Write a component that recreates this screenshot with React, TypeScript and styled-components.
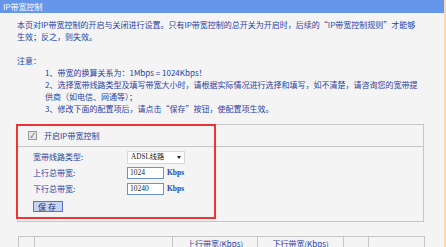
import React from 'react'
import styled, { createGlobalStyle } from 'styled-components'

const Colors = {
  page: '#f4f4f4',
  header: '#6496ea',
  text: '#2743a6',
  border: '#c6c6c6',
  stripe: '#fcd8aa',
  red: '#ee3535',
}

const GlobalStyle = createGlobalStyle`
  html, body {
    margin: 0;
    padding: 0;
    background: ${Colors.page};
    overflow: hidden;
  }
  body {
    font-family: "Noto Sans CJK SC", "Noto Sans", sans-serif;
    font-size: 8px;
    color: ${Colors.text};
  }
`

const Page = styled.div`
  display: flex;
  width: 446px;
  height: 247px;
  overflow: hidden;
`

const Main = styled.main`
  width: 444px;
  background: ${Colors.page};
`

const Stripe = styled.div`
  flex: 1;
  background: ${Colors.stripe};
`

const TitleBar = styled.header`
  height: 13px;
  background: ${Colors.header};
  color: #fff;
  line-height: 13px;
  padding-left: 3px;
`

const Content = styled.section`
  padding: 6px 0 0 17px;
  line-height: 12px;
`

const Line = styled.div`
  white-space: nowrap;
`

const NoteTitle = styled.div`
  margin-top: 12px;
`

const NoteList = styled.div`
  padding-left: 28px;
`

const Panel = styled.div`
  position: relative;
  margin-top: 9px;
  width: 405px;
  border: 1px solid ${Colors.border};
  padding-bottom: 8px;
`

const PanelHead = styled.div`
  display: flex;
  align-items: center;
  gap: 7px;
  height: 21px;
  padding-left: 10px;
  border-bottom: 1px solid ${Colors.border};
`

const Check = styled.span`
  width: 7px;
  height: 7px;
  border: 1px solid #9a9a9a;
  background: #e8e8e8;
  display: flex;
  align-items: center;
  justify-content: center;
  font-size: 7px;
  line-height: 7px;
  color: #555;
`

const Form = styled.div`
  padding: 2px 0 0 15px;
`

const Row = styled.div`
  display: grid;
  grid-template-columns: 92px max-content max-content;
  justify-content: start;
  align-items: center;
  column-gap: 2px;
  height: 16px;
`

const Select = styled.div`
  width: 50px;
  height: 11px;
  background: #fff;
  border: 1px solid #d8d8d8;
  display: flex;
  align-items: center;
  justify-content: space-between;
  padding: 0 3px 0 3px;
  font-family: "Liberation Serif", "Noto Sans CJK SC", serif;
  font-size: 7.2px;
  color: #222;
`

const Arrow = styled.span`
  width: 0;
  height: 0;
  border-left: 2.5px solid transparent;
  border-right: 2.5px solid transparent;
  border-top: 3px solid #222;
`

const Field = styled.div<{ $w: number }>`
  width: ${p => p.$w}px;
  height: 10px;
  background: #fff;
  border: 1px solid #6d8fd8;
  padding-left: 2px;
  margin-right: 1px;
  font-family: "Liberation Serif", serif;
  font-size: 7.5px;
  line-height: 10px;
  color: #222;
`

const Unit = styled.span`
  font-family: "Liberation Serif", serif;
  font-weight: bold;
  font-size: 7.5px;
`

const SaveButton = styled.button`
  margin-top: 4px;
  width: 30px;
  height: 11px;
  padding: 0;
  border: 1px solid #5574cc;
  background: #c7d5f5;
  color: #1c2c6c;
  font-family: "Noto Sans CJK SC", sans-serif;
  font-size: 8px;
  line-height: 9px;
  letter-spacing: 2px;
`

const Highlight = styled.div`
  position: absolute;
  left: -2px;
  top: -1px;
  width: 196px;
  height: 91px;
  border: 2px solid ${Colors.red};
  pointer-events: none;
`

const Table = styled.table`
  margin: 14px 0 0 1px;
  width: 407px;
  table-layout: fixed;
  border-collapse: collapse;
  border: 1px solid ${Colors.border};
  th {
    border: 1px solid ${Colors.border};
    font-weight: normal;
    padding: 2px 0;
    line-height: 10px;
    white-space: nowrap;
    overflow: hidden;
  }
`

const App = () => {
  return (
    <Page>
      <GlobalStyle />
      <Main>
        <TitleBar>{'IP带宽控制'}</TitleBar>
        <Content>
          <Line>{'本页对IP带宽控制的开启与关闭进行设置。只有IP带宽控制的总开关为开启时，后续的“IP带宽控制规则”才能够'}</Line>
          <Line>{'生效；反之，则失效。'}</Line>
          <NoteTitle>{'注意：'}</NoteTitle>
          <NoteList>
            <Line>{'1、带宽的换算关系为：1Mbps = 1024Kbps！'}</Line>
            <Line>{'2、选择宽带线路类型及填写带宽大小时，请根据实际情况进行选择和填写，如不清楚，请咨询您的宽带提'}</Line>
            <Line>{'供商（如电信、网通等）；'}</Line>
            <Line>{'3、修改下面的配置项后，请点击“保存”按钮，使配置项生效。'}</Line>
          </NoteList>
          <Panel>
            <PanelHead>
              <Check>{'✓'}</Check>
              <span>{'开启IP带宽控制'}</span>
            </PanelHead>
            <Form>
              <Row>
                <span>{'宽带线路类型:'}</span>
                <Select>
                  <span>{'ADSL线路'}</span>
                  <Arrow />
                </Select>
              </Row>
              <Row>
                <span>{'上行总带宽:'}</span>
                <Field $w={33}>{'1024'}</Field>
                <Unit>{'Kbps'}</Unit>
              </Row>
              <Row>
                <span>{'下行总带宽:'}</span>
                <Field $w={33}>{'10240'}</Field>
                <Unit>{'Kbps'}</Unit>
              </Row>
              <SaveButton>{'保存'}</SaveButton>
            </Form>
            <Highlight />
          </Panel>
          <Table>
            <colgroup>
              <col style={{ width: 16 }} />
              <col style={{ width: 138 }} />
              <col style={{ width: 42 }} />
              <col style={{ width: 43 }} />
              <col style={{ width: 43 }} />
              <col style={{ width: 43 }} />
              <col style={{ width: 25 }} />
              <col />
            </colgroup>
            <thead>
              <tr>
                <th rowSpan={2}>{'ID'}</th>
                <th rowSpan={2}>{'IP地址范围'}</th>
                <th colSpan={2}>{'上行带宽(Kbps)'}</th>
                <th colSpan={2}>{'下行带宽(Kbps)'}</th>
                <th rowSpan={2}>{'启用'}</th>
                <th rowSpan={2}>{'配置'}</th>
              </tr>
              <tr>
                <th>{'最小'}</th>
                <th>{'最大'}</th>
                <th>{'最小'}</th>
                <th>{'最大'}</th>
              </tr>
            </thead>
          </Table>
        </Content>
      </Main>
      <Stripe />
    </Page>
  )
}

export default App
